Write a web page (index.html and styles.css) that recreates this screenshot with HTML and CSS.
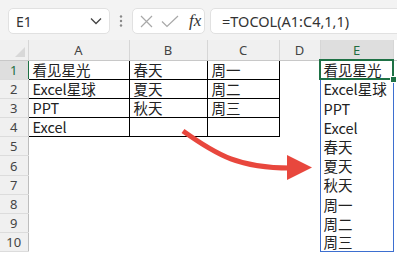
FILE: index.html
```html
<!DOCTYPE html>
<html lang="zh-CN">
<head>
    <meta charset="UTF-8">
    <title>TOCOL</title>
    <link rel="stylesheet" href="styles.css">
</head>
<body>
    <div class="page">
        <div class="toolbar">
            <div class="namebox">
                <span>E1</span>
                <svg width="12" height="8" viewBox="0 0 12 8"><polyline points="1,1.5 6,6.5 11,1.5" fill="none" stroke="#444" stroke-width="1.3"/></svg>
            </div>
            <svg class="dots" width="4" height="12" viewBox="0 0 4 12"><circle cx="2" cy="1.5" r="1.2" fill="#888"/><circle cx="2" cy="6" r="1.2" fill="#888"/><circle cx="2" cy="10.5" r="1.2" fill="#888"/></svg>
            <div class="fxbox">
                <svg width="13" height="13" viewBox="0 0 13 13"><path d="M1 1L12 12M12 1L1 12" stroke="#a8a8a8" stroke-width="1.2"/></svg>
                <svg width="18" height="13" viewBox="0 0 18 13"><polyline points="1,6.5 6,11.5 17,1" fill="none" stroke="#a8a8a8" stroke-width="1.2"/></svg>
                <span class="fx">fx</span>
            </div>
            <div class="formula">=TOCOL(A1:C4,1,1)</div>
        </div>

        <table class="grid">
            <colgroup>
                <col style="width:28px"><col style="width:101px"><col style="width:78px"><col style="width:72px"><col style="width:41px"><col style="width:73px"><col>
            </colgroup>
            <tr class="head">
                <th class="corner"></th><th>A</th><th>B</th><th>C</th><th>D</th><th class="sel">E</th><th class="rest"></th>
            </tr>
            <tr>
                <th class="rowhead sel">1</th><td class="b">看见星光</td><td class="b">春天</td><td class="b">周一</td><td></td><td class="spill active">看见星光</td><td></td>
            </tr>
            <tr>
                <th class="rowhead">2</th><td class="b">Excel星球</td><td class="b">夏天</td><td class="b">周二</td><td></td><td class="spill">Excel星球</td><td></td>
            </tr>
            <tr>
                <th class="rowhead">3</th><td class="b">PPT</td><td class="b">秋天</td><td class="b">周三</td><td></td><td class="spill">PPT</td><td></td>
            </tr>
            <tr>
                <th class="rowhead">4</th><td class="b">Excel</td><td class="b"></td><td class="b"></td><td></td><td class="spill">Excel</td><td></td>
            </tr>
            <tr>
                <th class="rowhead">5</th><td></td><td></td><td></td><td></td><td class="spill">春天</td><td></td>
            </tr>
            <tr>
                <th class="rowhead">6</th><td></td><td></td><td></td><td></td><td class="spill">夏天</td><td></td>
            </tr>
            <tr>
                <th class="rowhead">7</th><td></td><td></td><td></td><td></td><td class="spill">秋天</td><td></td>
            </tr>
            <tr>
                <th class="rowhead">8</th><td></td><td></td><td></td><td></td><td class="spill">周一</td><td></td>
            </tr>
            <tr>
                <th class="rowhead">9</th><td></td><td></td><td></td><td></td><td class="spill">周二</td><td></td>
            </tr>
            <tr>
                <th class="rowhead">10</th><td></td><td></td><td></td><td></td><td class="spill last">周三</td><td></td>
            </tr>
        </table>

        <!-- red arrow drawn over the sheet -->
        <svg class="arrow" width="397" height="256" viewBox="0 0 397 256">
            <path d="M183 131 C 218 156, 240 168, 290 168" fill="none" stroke="#e8473d" stroke-width="5"/>
            <polygon points="287,155 312,167.5 287,180" fill="#e8473d"/>
        </svg>
    </div>
</body>
</html>
```

FILE: styles.css
```css
body {
    margin: 0;
    background: #fff;
    font-family: "Noto Sans CJK SC", "Noto Sans", sans-serif;
    color: #222;
}

.page {
    position: relative;
    width: 397px;
    height: 256px;
    overflow: hidden;
}

.toolbar {
    height: 40px;
    box-sizing: border-box;
    padding: 8px 0 6px 8px;
    background: #f3f3f3;
    display: flex;
    align-items: stretch;
}

.namebox {
    width: 102px;
    box-sizing: border-box;
    background: #fff;
    border: 1px solid #e1e1e1;
    border-radius: 5px;
    display: flex;
    align-items: center;
    justify-content: space-between;
    padding: 0 7px 0 7px;
    font-family: "Noto Sans", sans-serif;
    font-size: 14px;
    color: #333;
}

.dots {
    align-self: center;
    margin: 0 9px 0 9px;
}

.fxbox {
    width: 73px;
    box-sizing: border-box;
    background: #fff;
    border: 1px solid #e1e1e1;
    border-radius: 5px;
    display: flex;
    align-items: center;
    gap: 8px;
    padding-left: 7px;
}

.fx {
    font-family: "Liberation Serif", serif;
    font-style: italic;
    font-size: 17px;
    color: #333;
    margin-left: 2px;
}

.formula {
    flex: 1;
    margin-left: 5px;
    margin-right: -6px;
    background: #fff;
    border: 1px solid #e1e1e1;
    border-radius: 5px;
    display: flex;
    align-items: center;
    padding-left: 11px;
    font-family: "Noto Sans", sans-serif;
    font-size: 14.5px;
    color: #333;
}

.grid {
    width: 397px;
    table-layout: fixed;
    border-collapse: collapse;
}

.grid tr {
    height: 19.2px;
}

.grid tr.head {
    height: 20px;
}

.grid th {
    background: #f0f0f0;
    font-family: "Noto Sans", sans-serif;
    font-weight: normal;
    font-size: 13px;
    color: #444;
    padding: 0;
    line-height: 16px;
}

.head th {
    border-right: 1px solid #d6d6d6;
    border-bottom: 1px solid #c8c8c8;
}

.head th.rest {
    background: #fff;
    border-right: none;
}

.head th.sel {
    background: #dedede;
    color: #1e6e42;
}

.corner {
    position: relative;
}

.corner::after {
    content: "";
    position: absolute;
    right: 3px;
    bottom: 3px;
    border-left: 10px solid transparent;
    border-bottom: 10px solid #d8d8d8;
}

.rowhead {
    border-right: 1px solid #bdbdbd;
    border-bottom: 1px solid #dcdcdc;
    text-align: center;
}

.rowhead.sel {
    background: #dedede;
    color: #1e6e42;
    border-right: 1px solid #1e7145;
}

.grid td {
    padding: 0 0 0 4px;
    font-size: 14.5px;
    line-height: 18px;
    vertical-align: bottom;
    white-space: nowrap;
}

.grid td.b {
    border: 1px solid #000;
}

.grid td.spill {
    border-left: 1px solid #3d6fd0;
    border-right: 1px solid #3d6fd0;
    padding-left: 3px;
}

.grid td.last {
    border-bottom: 1px solid #3d6fd0;
}

.grid td.active {
    position: relative;
    outline: 2px solid #1e7145;
    outline-offset: -1px;
}

.active::after {
    content: "";
    position: absolute;
    right: -4px;
    bottom: -4px;
    width: 5px;
    height: 5px;
    background: #1e7145;
    border: 1px solid #fff;
}

.arrow {
    position: absolute;
    left: 0;
    top: 0;
    pointer-events: none;
}
```
